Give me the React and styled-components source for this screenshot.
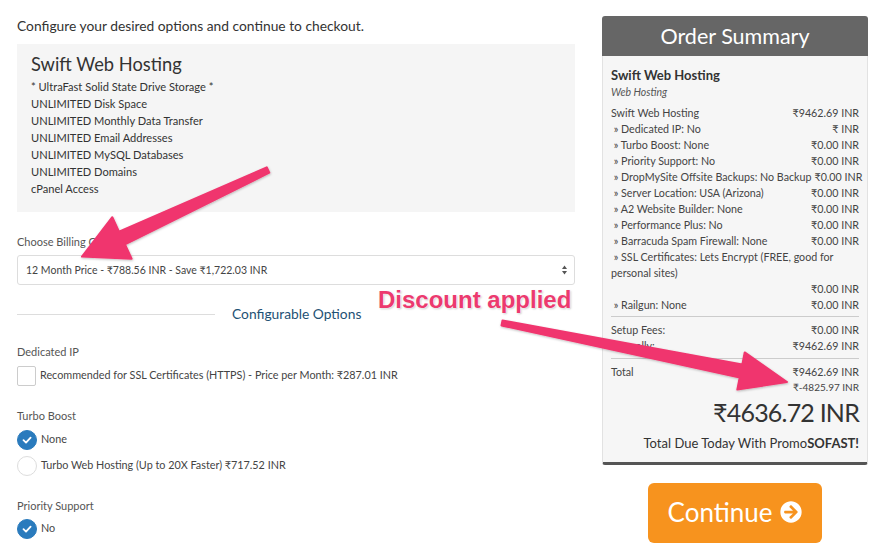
import React from "react";
import styled, { createGlobalStyle } from "styled-components";
import { FaArrowCircleRight } from "react-icons/fa";

const GlobalStyle = createGlobalStyle`
  html, body { margin: 0; padding: 0; background: #fff; }
  body {
    font-family: Lato, "Noto Sans", "DejaVu Sans", sans-serif;
    color: #333;
  }
  * { box-sizing: border-box; }
`;

const Page = styled.div`
  position: relative;
  width: 883px;
  height: 545px;
  overflow: hidden;
  display: flex;
  align-items: flex-start;
  gap: 27px;
  padding: 16px 15px 0 17px;
`;

const LeftColumn = styled.div`
  width: 558px;
  display: flex;
  flex-direction: column;
`;

const Intro = styled.p`
  margin: 1px 0 9px;
  font-size: 13.8px;
  line-height: 18px;
  color: #333;
`;

const ProductBox = styled.div`
  background: #f5f5f5;
  padding: 8px 14px 15px;
`;

const ProductTitle = styled.div`
  font-size: 18.3px;
  line-height: 24px;
  color: #333;
  margin-bottom: 2px;
`;

const Feature = styled.div`
  font-size: 11.1px;
  line-height: 17px;
  color: #333;
`;

const FieldLabel = styled.div`
  margin-top: ${(p) => p.$top || 22}px;
  margin-bottom: ${(p) => p.$bottom || 6}px;
  font-size: 11px;
  line-height: 16px;
  color: #555;
`;

const Select = styled.div`
  height: 30px;
  border: 1px solid #ddd;
  border-radius: 3px;
  background: #fff;
  display: flex;
  align-items: center;
  justify-content: space-between;
  padding: 0 6px 0 8px;
  font-size: 10.5px;
  color: #444;
`;

const SectionRow = styled.div`
  margin-top: 20px;
  display: flex;
  align-items: center;
  gap: 17px;
  height: 18px;
`;

const SectionLine = styled.div`
  width: 198px;
  height: 1px;
  background: #ddd;
`;

const SectionTitle = styled.div`
  font-size: 13.8px;
  line-height: 18px;
  color: #1e5174;
`;

const OptionRow = styled.div`
  display: flex;
  align-items: center;
  gap: 4px;
  height: 20px;
  margin-top: ${(p) => p.$top || 0}px;
  font-size: 10.8px;
  line-height: 16px;
  color: #444;
  span { margin-top: -2px; }
`;

const Checkbox = styled.div`
  width: 19px;
  height: 20px;
  border: 1px solid #ccc;
  border-radius: 2px;
  background: #fff;
`;

const Radio = styled.div`
  width: 20px;
  height: 20px;
  border-radius: 50%;
  border: 1px solid ${(p) => (p.$checked ? "#2a7bbd" : "#ddd")};
  background: ${(p) => (p.$checked ? "#2a7bbd" : "#fff")};
  display: flex;
  align-items: center;
  justify-content: center;
`;

const RightColumn = styled.div`
  width: 266px;
  display: flex;
  flex-direction: column;
  align-items: center;
`;

const Panel = styled.div`
  width: 266px;
`;

const PanelHeader = styled.div`
  height: 40px;
  background: #666;
  border-radius: 3px 3px 0 0;
  color: #fff;
  font-size: 21.5px;
  line-height: 40px;
  text-align: center;
`;

const PanelBody = styled.div`
  background: #f6f6f6;
  border-left: 1px solid #e2e2e2;
  border-right: 1px solid #e2e2e2;
  border-bottom: 3px solid #555;
  border-radius: 0 0 3px 3px;
  padding: 11px 8px 11px 8px;
  font-size: 10.7px;
  color: #444;
`;

const ProductName = styled.div`
  font-weight: 700;
  font-size: 13px;
  line-height: 16px;
  color: #333;
`;

const ProductGroup = styled.div`
  font-style: italic;
  font-size: 10.5px;
  line-height: 16px;
  margin-top: 1px;
  margin-bottom: 5px;
  color: #555;
`;

const LineItem = styled.div`
  display: flex;
  justify-content: space-between;
  gap: 3px;
  line-height: 16px;
  white-space: nowrap;
`;

const WrapLabel = styled.div`
  line-height: 16px;
`;

const Separator = styled.div`
  height: 1px;
  background: #ccc;
  margin: ${(p) => p.$m || "3px 0 5px"};
`;

const TotalRow = styled.div`
  display: flex;
  justify-content: space-between;
  align-items: flex-start;
`;

const TotalAmounts = styled.div`
  display: flex;
  flex-direction: column;
  align-items: flex-end;
`;

const Amount = styled.div`
  line-height: ${(p) => (p.$small ? 14 : 16)}px;
  font-size: ${(p) => (p.$small ? 10 : 10.7)}px;
`;

const BigPrice = styled.div`
  margin-top: 3px;
  text-align: right;
  font-size: 25px;
  letter-spacing: -0.8px;
  line-height: 30px;
  color: #333;
`;

const DueToday = styled.div`
  margin-top: 8px;
  text-align: right;
  font-size: 13px;
  line-height: 16px;
  color: #333;
  b { font-weight: 700; }
`;

const ContinueButton = styled.button`
  margin-top: 18px;
  width: 174px;
  height: 60px;
  border: none;
  border-radius: 6px;
  background: #f7931e;
  color: #fff;
  font-family: Lato, "Noto Sans", sans-serif;
  font-size: 26px;
  display: flex;
  align-items: center;
  justify-content: center;
  gap: 8px;
  padding: 0 0 2px;
`;

const Overlay = styled.svg`
  position: absolute;
  left: 0;
  top: 0;
  pointer-events: none;
`;

const Annotation = styled.div`
  position: absolute;
  left: 378px;
  top: 285px;
  font-family: "Liberation Sans", Arial, sans-serif;
  font-weight: 700;
  font-size: 24px;
  line-height: 30px;
  color: #ec3a6f;
  text-shadow: 0 0 2px #fff, 0 0 2px #fff, 1px 1px 2px rgba(0,0,0,0.25);
  pointer-events: none;
`;

const Check = () => (
  <svg width="12" height="12" viewBox="0 0 12 12">
    <path d="M2.5 6.2 L5 8.6 L9.6 3.6" fill="none" stroke="#fff" strokeWidth="1.8" strokeLinecap="round" strokeLinejoin="round" />
  </svg>
);

const SelectArrows = () => (
  <svg width="7" height="12" viewBox="0 0 7 12">
    <path d="M3.5 1.5 L6 5 L1 5 Z" fill="#555" />
    <path d="M3.5 10.5 L6 7 L1 7 Z" fill="#555" />
  </svg>
);

const items = [
  ["» Dedicated IP: No", "₹ INR"],
  ["» Turbo Boost: None", "₹0.00 INR"],
  ["» Priority Support: No", "₹0.00 INR"],
  ["» DropMySite Offsite Backups: No Backup", "₹0.00 INR"],
  ["» Server Location: USA (Arizona)", "₹0.00 INR"],
  ["» A2 Website Builder: None", "₹0.00 INR"],
  ["» Performance Plus: No", "₹0.00 INR"],
  ["» Barracuda Spam Firewall: None", "₹0.00 INR"],
];

const features = [
  "* UltraFast Solid State Drive Storage *",
  "UNLIMITED Disk Space",
  "UNLIMITED Monthly Data Transfer",
  "UNLIMITED Email Addresses",
  "UNLIMITED MySQL Databases",
  "UNLIMITED Domains",
  "cPanel Access",
];

export default function App() {
  return (
    <>
      <GlobalStyle />
      <Page>
        <LeftColumn>
          <Intro>Configure your desired options and continue to checkout.</Intro>
          <ProductBox>
            <ProductTitle>Swift Web Hosting</ProductTitle>
            {features.map((f) => (
              <Feature key={f}>{f}</Feature>
            ))}
          </ProductBox>

          <FieldLabel $top={22} $bottom={5}>Choose Billing Cycle</FieldLabel>
          <Select>
            <span>12 Month Price - ₹788.56 INR - Save ₹1,722.03 INR</span>
            <SelectArrows />
          </Select>

          <SectionRow>
            <SectionLine />
            <SectionTitle>Configurable Options</SectionTitle>
          </SectionRow>

          <FieldLabel $top={21} $bottom={6}>Dedicated IP</FieldLabel>
          <OptionRow>
            <Checkbox />
            <span>Recommended for SSL Certificates (HTTPS) - Price per Month: ₹287.01 INR</span>
          </OptionRow>

          <FieldLabel $top={22} $bottom={6}>Turbo Boost</FieldLabel>
          <OptionRow>
            <Radio $checked><Check /></Radio>
            <span>None</span>
          </OptionRow>
          <OptionRow $top={6}>
            <Radio />
            <span>Turbo Web Hosting (Up to 20X Faster) ₹717.52 INR</span>
          </OptionRow>

          <FieldLabel $top={22} $bottom={5}>Priority Support</FieldLabel>
          <OptionRow>
            <Radio $checked><Check /></Radio>
            <span>No</span>
          </OptionRow>
        </LeftColumn>

        <RightColumn>
          <Panel>
            <PanelHeader>Order Summary</PanelHeader>
            <PanelBody>
              <ProductName>Swift Web Hosting</ProductName>
              <ProductGroup>Web Hosting</ProductGroup>
              <LineItem>
                <span>Swift Web Hosting</span>
                <span>₹9462.69 INR</span>
              </LineItem>
              {items.map(([l, v]) => (
                <LineItem key={l}>
                  <span>{"\u00a0" + l}</span>
                  <span>{v}</span>
                </LineItem>
              ))}
              <WrapLabel>{"\u00a0» SSL Certificates: Lets Encrypt (FREE, good for personal sites)"}</WrapLabel>
              <LineItem>
                <span />
                <span>₹0.00 INR</span>
              </LineItem>
              <LineItem>
                <span>{"\u00a0» Railgun: None"}</span>
                <span>₹0.00 INR</span>
              </LineItem>
              <Separator $m="3px 0 5px" />
              <LineItem>
                <span>Setup Fees:</span>
                <span>₹0.00 INR</span>
              </LineItem>
              <LineItem>
                <span>Annually:</span>
                <span>₹9462.69 INR</span>
              </LineItem>
              <Separator $m="4px 0 5px" />
              <TotalRow>
                <Amount>Total</Amount>
                <TotalAmounts>
                  <Amount>₹9462.69 INR</Amount>
                  <Amount $small>₹-4825.97 INR</Amount>
                </TotalAmounts>
              </TotalRow>
              <BigPrice>₹4636.72 INR</BigPrice>
              <DueToday>
                Total Due Today With Promo<b>SOFAST!</b>
              </DueToday>
            </PanelBody>
          </Panel>
          <ContinueButton>
            <span>Continue</span>
            <FaArrowCircleRight size={22} />
          </ContinueButton>
        </RightColumn>

        <Overlay width="883" height="545" viewBox="0 0 883 545">
          <defs>
            <filter id="sh" x="-10%" y="-10%" width="120%" height="120%">
              <feDropShadow dx="0.5" dy="1" stdDeviation="1" floodColor="#000" floodOpacity="0.25" />
            </filter>
          </defs>
          <path
            d="M266.7 167.3 L119 231.7 L112.3 217.2 L82 256.6 L131.7 258.8 L125 244.3 L269.3 172.7 Z"
            fill="#f0366e"
            stroke="#f0366e"
            strokeWidth="2"
            strokeLinejoin="round"
            filter="url(#sh)"
          />
          <path
            d="M502.5 320.5 L742.3 364.6 L744.7 352.4 L787 382 L737.3 389.6 L739.7 377.4 L501.5 325.5 Z"
            fill="#f0366e"
            stroke="#f0366e"
            strokeWidth="2"
            strokeLinejoin="round"
            filter="url(#sh)"
          />
        </Overlay>
        <Annotation>Discount applied</Annotation>
      </Page>
    </>
  );
}
